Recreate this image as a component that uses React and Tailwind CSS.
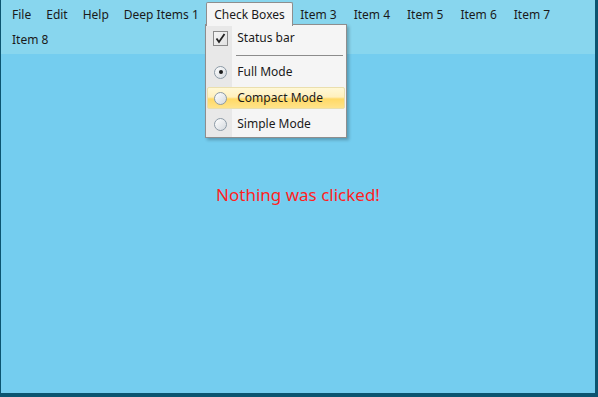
import React from 'react'

const FONT = { fontFamily: '"Noto Sans", "Open Sans", sans-serif' }

const ITEMS = ['File', 'Edit', 'Help', 'Deep Items 1', 'Check Boxes', 'Item 3', 'Item 4', 'Item 5', 'Item 6', 'Item 7', 'Item 8']

function Radio({ checked }) {
  return (
    <span className="flex h-[13px] w-[13px] items-center justify-center rounded-full border border-[#8c9aa6] bg-gradient-to-br from-[#ffffff] to-[#d4d9de]">
      {checked && <span className="h-[4px] w-[4px] rounded-full bg-[#1c1c1c]" />}
    </span>
  )
}

function CheckBox() {
  return (
    <span className="flex h-[15px] w-[15px] items-center justify-center border border-[#8a8a8a] bg-gradient-to-br from-[#f4f4f4] to-[#e2e2e2]">
      <svg width="11" height="11" viewBox="0 0 11 11">
        <path d="M1.5 5.5 L4 9 L9.5 1" fill="none" stroke="#222" strokeWidth="1.8" />
      </svg>
    </span>
  )
}

function Row({ icon, label, hot }) {
  return (
    <div
      className={
        'mx-[1px] flex h-[22px] items-center ' +
        (hot ? 'rounded-[2px] border border-[#eadfae] bg-[linear-gradient(#fff8d6_0%,#fff0be_45%,#ffd966_55%,#ffe38a_100%)]' : 'border border-transparent')
      }
    >
      <span className="flex w-[25px] justify-center">{icon}</span>
      <span className="pl-[4px] text-[12px] text-[#1a1a1a]">{label}</span>
    </div>
  )
}

function Dropdown() {
  return (
    <div className="absolute left-[-1px] top-[22px] z-10 w-[142px] border border-[#8e8e8e] bg-[#f5f5f5] shadow-[2px_2px_3px_rgba(0,0,0,0.25)]">
      <div className="relative py-[2px]">
        <div className="absolute bottom-0 left-0 top-0 w-[26px] bg-[#e8e8e8]" />
        <div className="relative">
          <Row icon={<CheckBox />} label="Status bar" />
          <div className="flex h-[12px] items-center pl-[30px] pr-[3px]">
            <div className="h-px w-full bg-[#8c8c8c]" />
          </div>
          <Row icon={<Radio checked />} label="Full Mode" />
          <div className="h-[4px]" />
          <Row icon={<Radio />} label="Compact Mode" hot />
          <div className="h-[4px]" />
          <Row icon={<Radio />} label="Simple Mode" />
        </div>
      </div>
    </div>
  )
}

export default function App() {
  return (
    <div style={FONT} className="flex h-[397px] w-[598px] flex-col border-b-4 border-l border-r-[3px] border-[#0b5470] bg-[#74cdef]">
      <div className="flex flex-wrap bg-[#88d6ee] pl-[3.5px] pt-[2px] pb-[2px]">
        {ITEMS.map((name) =>
          name === 'Check Boxes' ? (
            <div key={name} className="relative">
              <div className="relative z-20 flex h-[24px] items-center rounded-t-[2px] border border-b-0 border-[#8e8e8e] bg-[#f5f5f5] px-[7px] text-[12px] text-[#1a1a1a]">
                {name}
              </div>
              <Dropdown />
            </div>
          ) : (
            <div
              key={name}
              className={
                'flex h-[25px] items-center pl-[7.5px] text-[12px] text-[#1a1a1a] ' +
                (name.startsWith('Item') ? 'pr-[9.5px]' : 'pr-[7.5px]')
              }
            >
              {name}
            </div>
          )
        )}
      </div>
      <div className="flex flex-1 justify-center pt-[128px]">
        <span className="text-[17px] text-[#ff1f1f]">Nothing was clicked!</span>
      </div>
    </div>
  )
}
